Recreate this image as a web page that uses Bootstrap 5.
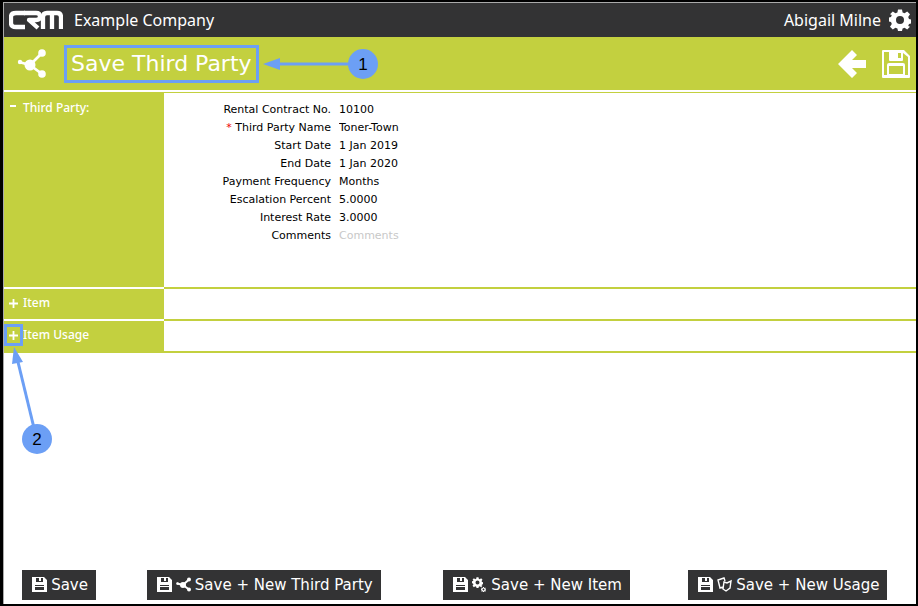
<!DOCTYPE html>
<html lang="en">
<head>
<meta charset="utf-8">
<meta name="viewport" content="width=device-width, initial-scale=1">
<title>Save Third Party</title>
<link rel="stylesheet" href="https://cdn.jsdelivr.net/npm/bootstrap@5.3.0/dist/css/bootstrap.min.css">
<style>
:root { --lime: #c3d03f; --ink: #333334; --note: #6c9ff5; }
body { font-family: "DejaVu Sans", Verdana, sans-serif; font-size: 11px; line-height: 18px; color: #000; background: #fff; }
.frame { border: 2px solid #000; border-left-width: 3px; }
.frame-inner { border-top: 1px solid #aaa; border-left: 1px solid #aaa; }
.topbar { background: var(--ink); height: 34px; padding: 0 5px; font-family: "Noto Sans", Tahoma, sans-serif; font-size: 16px; line-height: 24px; }
.logo { width: 54px; height: 20px; }
.company { margin-left: 11px; }
.titlebar { background: var(--lime); height: 53px; padding: 0 6px 0 13px; }
.title-box { border: 3px solid var(--note); font-size: 22px; line-height: 32px; padding: 0 4px; margin-left: 17px; }
.rule { border-top: 1px solid var(--lime); margin-top: 2px; }
.icon-btn { padding: 0; border: 0; background: none; color: #fff; line-height: 0; }
.side { width: 160px; background: var(--lime); color: #fff; border-bottom: 2px solid #fff; font-size: 12px; font-family: "Noto Sans", Tahoma, sans-serif; font-weight: 500; padding: 5px 0 0 2px; }
.pane { border-bottom: 2px solid var(--lime); }
.sect { min-height: 32px; }
.sect-main { min-height: 196px; }
.sect:last-child .side { border-bottom-color: var(--lime); }
.toggle { position: relative; width: 15px; height: 18px; padding: 0; border: 0; background: none; color: #fff; line-height: 0; margin-right: 2px; }
.sect-main .side { padding-top: 6px; }
.marked::before { content: ""; position: absolute; inset: -2px; border: 3px solid var(--note); }
.fields { padding: 8px 0 0 7px; }
.fields label { width: 160px; text-align: right; }
.fields input { flex: 1; min-width: 0; height: 18px; border: 0; padding: 0; margin-left: 8px; background: none; color: #000; outline: 0; }
.fields input::placeholder { color: #c8c8c8; opacity: 1; }
.req { color: #e00; }
.arrow-1 { position: absolute; left: 100%; top: 0; width: 124px; height: 32px; }
.arrow-2 { position: absolute; left: 0; top: 18px; width: 50px; height: 112px; }
.note-num { font-family: "Liberation Sans", Arial, sans-serif; font-size: 17px; fill: #000; }
.actions { display: grid; grid-template-columns: 110fr 299fr 246fr 256fr; justify-items: center; padding-bottom: 4px; }
.act { display: flex; align-items: center; background: var(--ink); color: #fff; border: 0; height: 30px; padding: 0 8px 0 10px; font-size: 15px; white-space: nowrap; }
.act svg { width: 15px; height: 15px; margin-right: 4px; margin-bottom: 2px; }
</style>
<script src="https://cdn.jsdelivr.net/npm/bootstrap@5.3.0/dist/js/bootstrap.bundle.min.js"></script>
</head>
<body>
<svg class="d-none" aria-hidden="true">
  <symbol id="disk" viewBox="0 0 28 28"><path fill="currentColor" fill-rule="evenodd" d="M1 0h21l6 6v21q0 1-1 1H1q-1 0-1-1V1q0-1 1-1zM2 2v23h3V15q0-2 2-2h14q2 0 2 2v10h3V7l-5-4v7q0 1-1 1H8q-1 0-1-1V2zM16 3v5h3V3zM7 16v8h14v-8z"/></symbol>
  <symbol id="disk-small" viewBox="0 0 15 15"><path fill="currentColor" fill-rule="evenodd" d="M0 0h12l3 3v12H0zM4 1v4h7V1H9v3H7V1zM3 8v1h9V8zM3 10v3h9v-3z"/></symbol>
  <symbol id="share" viewBox="0 0 30 30"><g fill="currentColor"><circle cx="13" cy="16" r="5.500"/><circle cx="25" cy="4" r="3.800"/><circle cx="25" cy="25" r="3.800"/><circle cx="3" cy="13" r="2.200"/></g><path fill="none" stroke="currentColor" stroke-width="2.800" d="M2 13l11 3L25 4M13 16l12 9"/></symbol>
  <symbol id="share-small" viewBox="0 0 15 15"><g fill="currentColor"><circle cx="7" cy="8" r="3"/><circle cx="13" cy="2.500" r="2"/><circle cx="13" cy="12.500" r="2"/><circle cx="1.500" cy="6.500" r="1.300"/></g><path fill="none" stroke="currentColor" stroke-width="2" d="M1 6.500l6 1.500 6-5.500M7 8l6 4.500"/></symbol>
  <symbol id="gear" viewBox="-11 -11 22 22"><path fill="currentColor" fill-rule="evenodd" d="M-2-10.500h4l.6 3 2 .8 2.600-1.800 2.800 2.800-1.800 2.600.8 2 2 .6v4l-2 .6-.8 2L10 6.700 7.200 9.500 4.600 7.700l-2 .8-.6 2.500h-4l-.6-2.500-2-.8-2.600 1.800L-10 6.700l1.800-2.600-.8-2-2-.6v-4l2-.6.8-2L-10-5.700-7.200-8.500l2.600 1.800 2-.8zM0-4a4 4 0 1 0 0 8a4 4 0 1 0 0-8z"/></symbol>
</svg>
<div class="frame min-vh-100 d-flex flex-column">
<div class="frame-inner flex-grow-1 d-flex flex-column">
  <header class="topbar d-flex align-items-center text-white">
    <svg class="logo" viewBox="0 0 54 20" role="img" aria-label="CRM"><g fill="none" stroke="#fff" stroke-width="4.300" stroke-linejoin="round"><path d="M16 3H7Q2 3 2 7v6q0 4 5 4h9"/><path d="M15 3h12q4 0 4 3.500T27 10h-7l9 8"/><path d="M34 19V7q0-4 4-4h10q4 0 4 4v12M43 3v16"/></g></svg>
    <span class="company">Example Company</span>
    <span class="ms-auto me-2">Abigail Milne</span>
    <button class="icon-btn" type="button" aria-label="Settings"><svg width="22" height="22"><use href="#gear"/></svg></button>
  </header>
  <div class="titlebar d-flex align-items-center text-white">
    <svg width="30" height="30" aria-hidden="true"><use href="#share"/></svg>
    <h1 class="title-box position-relative mb-0 fw-normal">Save Third Party
      <svg class="arrow-1" viewBox="0 0 124 32" role="img" aria-label="Note 1"><path d="M20 16h80" stroke="#6c9ff5" stroke-width="3"/><path d="M7 16l17-6v12z" fill="#6c9ff5"/><circle cx="107" cy="16" r="15" fill="#6c9ff5"/><text class="note-num" x="107" y="22" text-anchor="middle">1</text></svg>
    </h1>
    <button class="icon-btn ms-auto" type="button" aria-label="Back"><svg width="28" height="28" viewBox="0 0 28 28"><path fill="currentColor" d="M0 14L14 0l5 5-5 5h14v8H14l5 5-5 5z"/></svg></button>
    <button class="icon-btn" type="button" aria-label="Save"><svg class="ms-3 me-0" width="28" height="28"><use href="#disk"/></svg></button>
  </div>
  <div class="rule"></div>
  <main>
    <section class="sect sect-main d-flex">
      <div class="side flex-shrink-0 d-flex align-items-start"><button class="toggle" type="button" aria-label="Collapse Third Party"><svg width="11" height="12" viewBox="0 0 11 12"><path d="M2 4h6" stroke="currentColor" stroke-width="2"/></svg></button><span>Third Party:</span></div>
      <form class="pane fields flex-grow-1">
        <div class="d-flex"><label for="f1">Rental Contract No.</label><input id="f1" type="text" value="10100"></div>
        <div class="d-flex"><label for="f2"><span class="req">*</span> Third Party Name</label><input id="f2" type="text" value="Toner-Town" required></div>
        <div class="d-flex"><label for="f3">Start Date</label><input id="f3" type="text" value="1 Jan 2019"></div>
        <div class="d-flex"><label for="f4">End Date</label><input id="f4" type="text" value="1 Jan 2020"></div>
        <div class="d-flex"><label for="f5">Payment Frequency</label><input id="f5" type="text" value="Months"></div>
        <div class="d-flex"><label for="f6">Escalation Percent</label><input id="f6" type="text" value="5.0000"></div>
        <div class="d-flex"><label for="f7">Interest Rate</label><input id="f7" type="text" value="3.0000"></div>
        <div class="d-flex"><label for="f8">Comments</label><input id="f8" type="text" placeholder="Comments"></div>
      </form>
    </section>
    <section class="sect d-flex">
      <div class="side flex-shrink-0 d-flex align-items-start"><button class="toggle" type="button" aria-label="Expand Item"><svg width="11" height="11" viewBox="0 0 11 11"><path d="M1 5.500h9M5.500 1v9" stroke="currentColor" stroke-width="1.800"/></svg></button><span>Item</span></div>
      <div class="pane flex-grow-1"></div>
    </section>
    <section class="sect d-flex">
      <div class="side flex-shrink-0 d-flex align-items-start"><button class="toggle marked" type="button" aria-label="Expand Item Usage"><svg width="11" height="11" viewBox="0 0 11 11"><path d="M1 5.500h9M5.500 1v9" stroke="currentColor" stroke-width="1.800"/></svg>
        <svg class="arrow-2" viewBox="0 0 50 112" role="img" aria-label="Note 2"><path d="M12 18l16 66" stroke="#6c9ff5" stroke-width="3"/><path d="M8 3l9 15-11 2z" fill="#6c9ff5"/><circle cx="31" cy="95" r="15" fill="#6c9ff5"/><text class="note-num" x="31" y="101" text-anchor="middle">2</text></svg></button><span>Item Usage</span></div>
      <div class="pane flex-grow-1"></div>
    </section>
  </main>
  <footer class="actions mt-auto">
    <button class="act" type="button"><svg><use href="#disk-small"/></svg>Save</button>
    <button class="act" type="button"><svg><use href="#disk-small"/></svg><svg><use href="#share-small"/></svg>Save + New Third Party</button>
    <button class="act" type="button"><svg><use href="#disk-small"/></svg><svg viewBox="0 0 15 15"><use href="#gear" x="0" y="0" width="11" height="11"/><use href="#gear" x="9" y="10" width="5" height="5"/></svg>Save + New Item</button>
    <button class="act" type="button"><svg><use href="#disk-small"/></svg><svg viewBox="0 0 15 15"><path fill="none" stroke="currentColor" stroke-width="1.400" d="M6 10L3 11 1 3l6-2 1 3M7 5l3 1 4-2-1 7-4 3-3-2z"/></svg>Save + New Usage</button>
  </footer>
</div>
</div>
</body>
</html>
